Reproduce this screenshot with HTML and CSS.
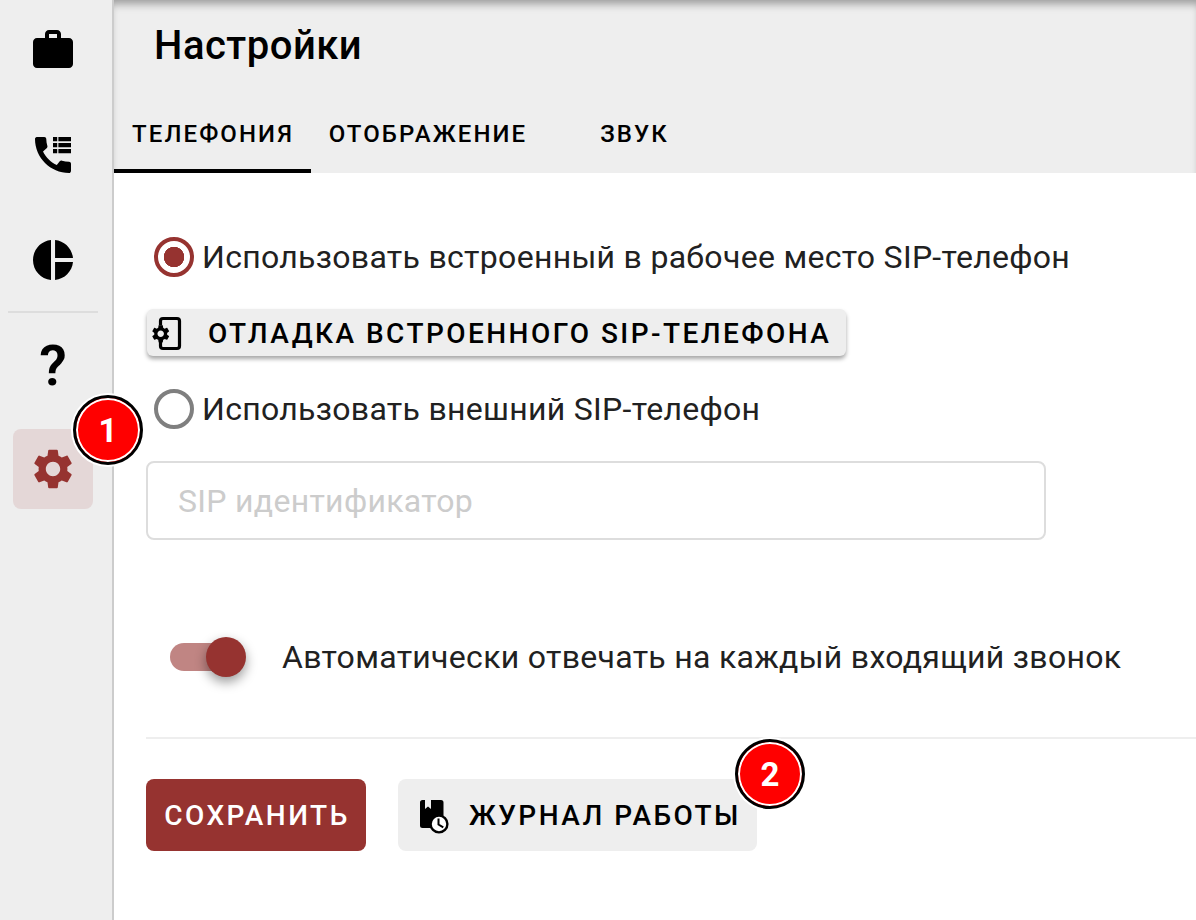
FILE: index.html
```html
<!DOCTYPE html>
<html lang="ru">
<head>
    <meta charset="UTF-8">
    <title>Настройки</title>
    <link rel="stylesheet" href="styles.css">
</head>
<body>
    <div class="app">
        <nav class="sidebar">
            <div class="nav-item">
                <svg class="nav-icon" viewBox="0 0 24 24"><path d="M20 6h-4V4c0-1.11-.89-2-2-2h-4c-1.11 0-2 .89-2 2v2H4c-1.11 0-1.99.89-1.99 2L2 19c0 1.11.89 2 2 2h16c1.11 0 2-.89 2-2V8c0-1.11-.89-2-2-2zm-6 0h-4V4h4v2z"/></svg>
            </div>
            <div class="nav-item">
                <svg class="nav-icon" viewBox="0 0 24 24"><path d="M20.01 15.38c-1.23 0-2.42-.2-3.53-.56-.35-.12-.74-.03-1.01.24l-1.57 1.97c-2.83-1.35-5.48-3.9-6.89-6.83l1.95-1.66c.27-.28.35-.67.24-1.02-.37-1.11-.56-2.3-.56-3.53 0-.54-.45-.99-.99-.99H4.19C3.65 3 3 3.24 3 3.99 3 13.28 10.73 21 20.01 21c.71 0 .99-.63.99-1.18v-3.45c0-.54-.45-.99-.99-.99z"/><path d="M12 3h2.100v2.100H12zM14.700 3H21v2.100h-6.300zM12 6h2.100v2.100H12zM14.700 6H21v2.100h-6.300zM12 9h2.100v2.100H12zM14.700 9H21v2.100h-6.300z"/></svg>
            </div>
            <div class="nav-item">
                <svg class="nav-icon" viewBox="0 0 24 24"><path d="M11 2v20c-5.070-.5-9-4.790-9-10s3.930-9.500 9-10zm2.030 0v8.990H22c-.47-4.740-4.240-8.520-8.970-8.990zm0 11.010V22c4.740-.47 8.500-4.250 8.970-8.990h-8.970z"/></svg>
            </div>
            <div class="nav-divider"></div>
            <div class="nav-item nav-help">?</div>
            <div class="nav-item nav-active">
                <svg class="nav-icon" viewBox="0 0 24 24"><path d="M19.140 12.940c.04-.3.06-.61.06-.94 0-.32-.02-.64-.07-.94l2.030-1.580c.18-.14.23-.41.12-.61l-1.920-3.320c-.12-.22-.37-.29-.59-.22l-2.390.96c-.5-.38-1.030-.7-1.620-.94l-.36-2.540c-.04-.24-.24-.41-.48-.41h-3.840c-.24 0-.43.17-.47.41l-.36 2.540c-.59.24-1.130.57-1.620.94l-2.390-.96c-.22-.08-.47 0-.59.22L2.740 8.870c-.12.21-.08.47.12.61l2.030 1.580c-.05.3-.09.63-.09.94s.02.64.07.94l-2.030 1.580c-.18.14-.23.41-.12.61l1.920 3.320c.12.22.37.29.59.22l2.390-.96c.5.38 1.030.7 1.620.94l.36 2.540c.05.24.24.41.48.41h3.840c.24 0 .44-.17.47-.41l.36-2.540c.59-.24 1.130-.56 1.620-.94l2.390.96c.22.08.47 0 .59-.22l1.920-3.320c.12-.22.07-.47-.12-.61l-2.010-1.580zM12 15.600c-1.980 0-3.600-1.620-3.600-3.600s1.620-3.600 3.600-3.600 3.600 1.620 3.600 3.600-1.620 3.600-3.600 3.600z"/></svg>
                <span class="badge badge-one">1</span>
            </div>
        </nav>

        <main class="content">
            <header class="page-head">
                <h1 class="page-title">Настройки</h1>
                <div class="tabs">
                    <div class="tab tab-active">Телефония</div>
                    <div class="tab tab-view">Отображение</div>
                    <div class="tab tab-sound">Звук</div>
                </div>
            </header>

            <section class="form">
                <div class="radio-row">
                    <span class="radio radio-on"></span>
                    <span>Использовать встроенный в рабочее место SIP-телефон</span>
                </div>
                <button class="debug-btn">
                    <svg class="debug-icon" viewBox="0 0 30 36">
                        <path class="debug-phone" d="M8.500 9.500V5A2.500 2.500 0 0 1 11 2.500h14A2.500 2.500 0 0 1 27.500 5v25a2.500 2.500 0 0 1-2.500 2.500H11A2.500 2.500 0 0 1 8.500 30v-4"/>
                        <path transform="translate(-2.100 7) scale(.9)" d="M19.140 12.940c.04-.3.06-.61.06-.94 0-.32-.02-.64-.07-.94l2.030-1.580c.18-.14.23-.41.12-.61l-1.920-3.320c-.12-.22-.37-.29-.59-.22l-2.390.96c-.5-.38-1.030-.7-1.620-.94l-.36-2.540c-.04-.24-.24-.41-.48-.41h-3.840c-.24 0-.43.17-.47.41l-.36 2.540c-.59.24-1.130.57-1.620.94l-2.390-.96c-.22-.08-.47 0-.59.22L2.740 8.870c-.12.21-.08.47.12.61l2.030 1.580c-.05.3-.09.63-.09.94s.02.64.07.94l-2.030 1.580c-.18.14-.23.41-.12.61l1.920 3.320c.12.22.37.29.59.22l2.390-.96c.5.38 1.030.7 1.620.94l.36 2.540c.05.24.24.41.48.41h3.840c.24 0 .44-.17.47-.41l.36-2.540c.59-.24 1.130-.56 1.620-.94l2.390.96c.22.08.47 0 .59-.22l1.920-3.320c.12-.22.07-.47-.12-.61l-2.010-1.580zM12 15.600c-1.980 0-3.600-1.620-3.600-3.600s1.620-3.600 3.600-3.600 3.600 1.620 3.600 3.600-1.620 3.600-3.600 3.600z"/>
                    </svg>
                    <span>Отладка встроенного SIP-телефона</span>
                </button>
                <div class="radio-row radio-row-second">
                    <span class="radio"></span>
                    <span>Использовать внешний SIP-телефон</span>
                </div>
                <input class="sip-input" type="text" placeholder="SIP идентификатор">

                <div class="switch-row">
                    <span class="switch"><span class="switch-thumb"></span></span>
                    <span>Автоматически отвечать на каждый входящий звонок</span>
                </div>
            </section>

            <div class="actions">
                <button class="btn btn-save">Сохранить</button>
                <button class="btn btn-log">
                    <svg class="log-icon" viewBox="0 0 30 34">
                        <path d="M2.500 0H5v9l3-2.500L11 9V0h10a2.500 2.500 0 0 1 2.500 2.500V28H2.500A2.500 2.500 0 0 1 0 25.500V2.500A2.500 2.500 0 0 1 2.500 0z"/>
                        <circle class="log-clock" cx="19" cy="24" r="8.400"/>
                        <path class="log-hands" d="M18.500 18.500v6l4.800 2.900"/>
                    </svg>
                    <span>Журнал работы</span>
                    <span class="badge badge-two">2</span>
                </button>
            </div>
        </main>
    </div>
</body>
</html>
```

FILE: styles.css
```css
* {
    box-sizing: border-box;
}

html, body {
    margin: 0;
    height: 100%;
    overflow: hidden;
}

body {
    font-family: Roboto, sans-serif;
    color: #212121;
    background: #fff;
}

.app {
    display: flex;
    height: 920px;
}

/* left rail */
.sidebar {
    width: 114px;
    flex-shrink: 0;
    background: #eee;
    border-right: 2px solid #ccc;
    padding: 10px 19px 0 13px;
    display: flex;
    flex-direction: column;
    gap: 25px;
}

.nav-item {
    position: relative;
    width: 80px;
    height: 80px;
    flex-shrink: 0;
    display: flex;
    align-items: center;
    justify-content: center;
    border-radius: 8px;
}

.nav-icon {
    width: 48px;
    height: 48px;
    fill: #000;
}

.nav-divider {
    width: 90px;
    height: 2px;
    margin: -14px 0 -12px -5px;
    background: #ddd;
}

.nav-help {
    margin-bottom: -2px;
    font-size: 56px;
    font-weight: 600;
    color: #000;
}

.nav-active {
    background: #e4d7d7;
}

.nav-active .nav-icon {
    fill: #963330;
}

/* numbered markers */
.badge {
    position: absolute;
    width: 70px;
    height: 70px;
    display: flex;
    align-items: center;
    justify-content: center;
    border-radius: 50%;
    background: #f00;
    border: 3px solid #000;
    box-shadow: inset 0 0 0 2px #fff, 0 0 0 2px #fff;
    color: #fff;
    font-family: Roboto, sans-serif;
    font-size: 33px;
    font-weight: 700;
    letter-spacing: 0;
    z-index: 2;
}

.badge-one {
    left: 60px;
    top: -34px;
}

.badge-two {
    right: -48px;
    top: -40px;
}

/* page */
.content {
    flex: 1;
    min-width: 0;
}

.page-head {
    height: 173px;
    background: #eee;
    box-shadow: inset 0 8px 8px -4px rgba(0,0,0,0.35);
}

.page-title {
    margin: 0;
    padding: 22px 0 0 40px;
    height: 110px;
    font-size: 40px;
    font-weight: 500;
    letter-spacing: .5px;
    line-height: 48px;
    color: #000;
}

.tabs {
    display: flex;
    height: 63px;
}

.tab {
    height: 63px;
    padding: 0 0 11px 1px;
    display: flex;
    align-items: center;
    justify-content: center;
    border-bottom: 4px solid transparent;
    font-size: 24px;
    font-weight: 500;
    letter-spacing: 2.100px;
    text-transform: uppercase;
    color: #000;
}

.tab-active {
    width: 197px;
    border-bottom-color: #000;
}

.tab-view {
    width: 233px;
}

.tab-sound {
    width: 180px;
}

.form {
    padding: 64px 0 0 32px;
    font-size: 32px;
    letter-spacing: .3px;
}

.radio-row {
    height: 40px;
    padding-left: 8px;
    display: flex;
    align-items: center;
    gap: 8px;
}

.radio-row-second {
    margin-top: 33px;
}

.radio {
    width: 40px;
    height: 40px;
    flex-shrink: 0;
    border-radius: 50%;
    border: 4px solid #7f7f7f;
}

.radio-on {
    border-color: #963330;
    background: radial-gradient(circle, #963330 10px, #fff 10.500px);
}

.debug-btn {
    display: flex;
    align-items: center;
    width: 699px;
    height: 47px;
    margin: 32px 0 0 1px;
    padding: 2px 0 0 5px;
    border: none;
    border-radius: 6px;
    background: #eee;
    box-shadow: 0 3px 4px rgba(0,0,0,0.35);
    color: #000;
    font-family: Roboto, sans-serif;
    font-size: 28px;
    font-weight: 500;
    letter-spacing: 2.450px;
    text-transform: uppercase;
}

.debug-icon {
    width: 30px;
    height: 36px;
    flex-shrink: 0;
    margin-right: 26px;
    fill: #000;
}

.debug-phone {
    fill: none;
    stroke: #000;
    stroke-width: 3.200;
}

.sip-input {
    display: block;
    width: 900px;
    height: 79px;
    margin: 32px 0 0;
    padding: 0 30px;
    border: 2px solid #ddd;
    border-radius: 8px;
    font-family: Roboto, sans-serif;
    font-size: 32px;
    letter-spacing: .3px;
    outline: none;
}

.sip-input::placeholder {
    color: #ccc;
}

.switch-row {
    display: flex;
    align-items: center;
    height: 40px;
    margin-top: 97px;
    padding-left: 24px;
    gap: 56px;
}

.switch {
    position: relative;
    width: 56px;
    height: 28px;
    flex-shrink: 0;
    border-radius: 14px;
    background: rgba(150,51,48,0.6);
}

.switch-thumb {
    position: absolute;
    left: 36px;
    top: -6px;
    width: 40px;
    height: 40px;
    border-radius: 50%;
    background: #963330;
    box-shadow: 0 5px 12px rgba(0,0,0,0.4);
}

.actions {
    display: flex;
    gap: 32px;
    margin-top: 60px;
    margin-left: 32px;
    padding-top: 40px;
    border-top: 2px solid #eee;
}

.btn {
    position: relative;
    height: 72px;
    display: flex;
    align-items: center;
    border: none;
    border-radius: 8px;
    font-family: Roboto, sans-serif;
    font-size: 28px;
    font-weight: 500;
    letter-spacing: 2.450px;
    text-transform: uppercase;
}

.btn-save {
    width: 220px;
    padding: 0 0 0 2px;
    justify-content: center;
    background: #963330;
    color: #fff;
}

.btn-log {
    width: 359px;
    padding: 0 0 0 22px;
    background: #eee;
    color: #000;
}

.log-icon {
    width: 30px;
    height: 34px;
    flex-shrink: 0;
    margin: 4px 19px 0 0;
    fill: #000;
}

.log-clock {
    fill: #fff;
    stroke: #000;
    stroke-width: 2.400;
}

.log-hands {
    fill: none;
    stroke: #000;
    stroke-width: 2;
}
```
